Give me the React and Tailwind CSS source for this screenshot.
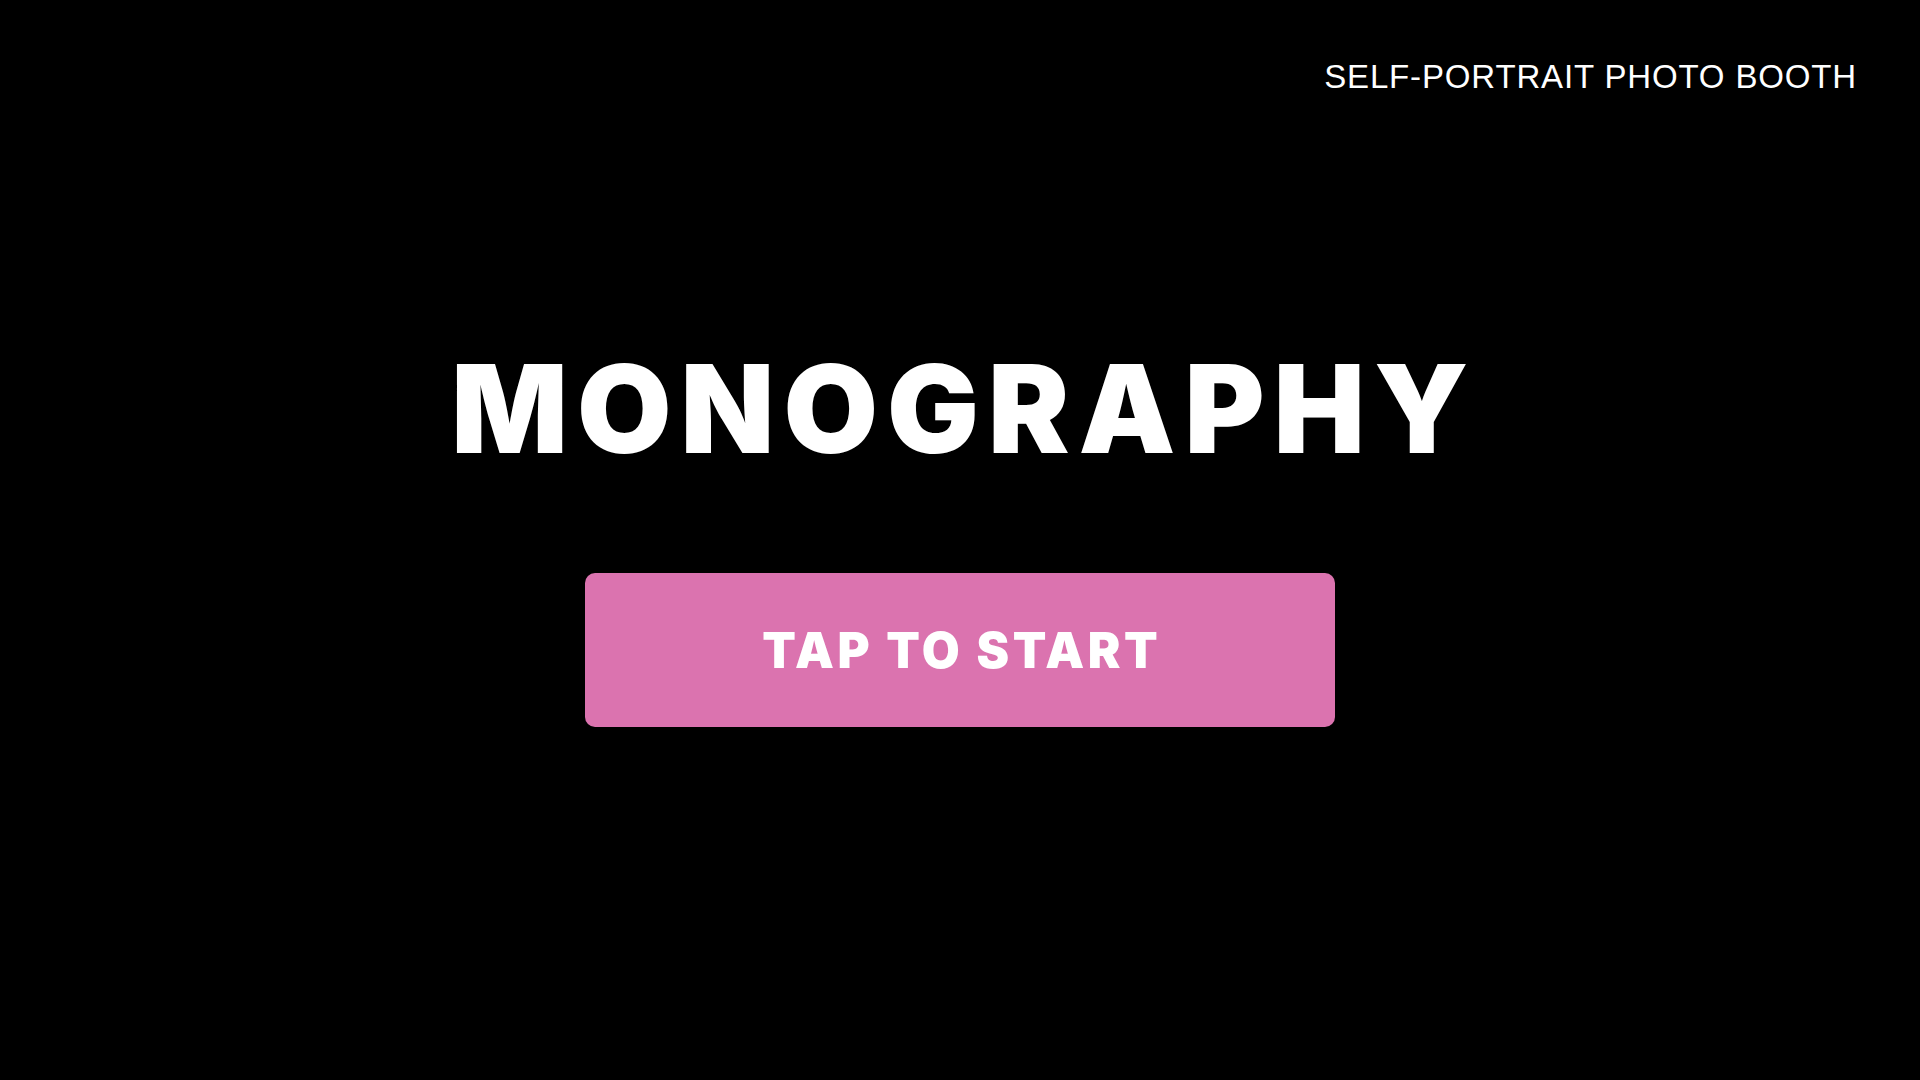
export default function App() {
  return (
    <div className="min-h-screen w-full bg-black text-white flex flex-col">
      {/* top bar */}
      <header className="flex justify-end pt-[58px] pr-[63px]">
        <span className="font-['Liberation_Sans',Arial,sans-serif] text-[33px] leading-[38px] tracking-[0.85px]">
          SELF-PORTRAIT PHOTO BOOTH
        </span>
      </header>

      <main className="flex flex-col items-center">
        <h1 className="mt-[252px] pl-[9px] font-['Inter',sans-serif] font-black text-[122px] leading-none tracking-[9px]">
          MONOGRAPHY
        </h1>
        <button className="mt-[103px] w-[750px] h-[154px] rounded-[10px] bg-[#db73af] flex items-center justify-center pl-[3.5px] font-['Inter',sans-serif] font-black text-[49px] leading-none tracking-[3.5px] text-white">
          TAP TO START
        </button>
      </main>
    </div>
  );
}
